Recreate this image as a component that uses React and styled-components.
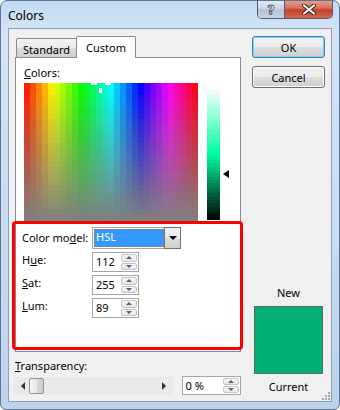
import React from "react";
import styled, { createGlobalStyle } from "styled-components";

const GlobalStyle = createGlobalStyle`
  html, body {
    margin: 0;
    padding: 0;
    background: #ffffff;
  }
  body {
    font-family: "Noto Sans", "Liberation Sans", sans-serif;
    font-size: 11px;
    color: #000;
  }
`;

const NEW_COLOR = "#00b074";

const Window = styled.div`
  width: 340px;
  height: 410px;
  box-sizing: border-box;
  border: 1px solid #5d7592;
  border-radius: 7px 7px 6px 6px;
  background: linear-gradient(180deg, #c4daf2 0%, #d4e4f5 8%, #c7dbf1 60%, #bcd3ee 100%);
  display: flex;
  flex-direction: column;
  overflow: hidden;
  position: relative;
`;

const TitleBar = styled.div`
  height: 27px;
  display: flex;
  align-items: flex-start;
  justify-content: space-between;
  padding-left: 7px;
`;

const Title = styled.div`
  font-size: 12px;
  line-height: 14px;
  padding-top: 8px;
  color: #000;
`;

const CaptionButtons = styled.div`
  display: flex;
  margin-right: 6px;
  margin-top: -1px;
  border: 1px solid #4d5e74;
  border-top: none;
  border-radius: 0 0 5px 5px;
  overflow: hidden;
  height: 18px;
`;

const CaptionButton = styled.div`
  height: 18px;
  display: flex;
  align-items: center;
  justify-content: center;
  box-sizing: border-box;
`;

const HelpButton = styled(CaptionButton)`
  width: 27px;
  background: linear-gradient(180deg, #e3ebf4 0%, #cdd9e6 45%, #b4c3d4 55%, #c5d3e2 100%);
  border-right: 1px solid #4d5e74;
  color: #fff;
  font-family: "DejaVu Sans", sans-serif;
  font-weight: bold;
  font-size: 13px;
  -webkit-text-stroke: 0.8px #3b4a5c;
`;

const CloseButton = styled(CaptionButton)`
  width: 47px;
  background: linear-gradient(180deg, #e8a493 0%, #d8705c 45%, #c2402a 55%, #d3674e 100%);
`;

const Client = styled.div`
  flex: 1;
  margin: 0 7px 7px 7px;
  border: 1px solid #8d9fb6;
  background: #f0f0f0;
  display: flex;
  position: relative;
`;

const LeftColumn = styled.div`
  width: 226px;
  margin-left: 6px;
  padding-top: 7px;
  display: flex;
  flex-direction: column;
`;

const Tabs = styled.div`
  display: flex;
  align-items: flex-end;
  height: 22px;
  padding-left: 1px;
  position: relative;
  z-index: 1;
  margin-bottom: -1px;
`;

const Tab = styled.div`
  box-sizing: border-box;
  height: ${(p) => (p.$active ? "22px" : "20px")};
  padding: ${(p) => (p.$active ? "3px 9px 0 9px" : "3px 6px 0 6px")};
  border: 1px solid #898c95;
  border-bottom: ${(p) => (p.$active ? "none" : "1px solid #898c95")};
  border-radius: 2px 2px 0 0;
  margin-left: ${(p) => (p.$active ? "-1px" : "0")};
  background: ${(p) =>
    p.$active ? "#ffffff" : "linear-gradient(180deg, #f2f2f2 0%, #ebebeb 50%, #dddddd 51%, #cfcfcf 100%)"};
  font-size: 11px;
  line-height: 15px;
  white-space: nowrap;
`;

const TabPanel = styled.div`
  box-sizing: border-box;
  height: 295px;
  border: 1px solid #898c95;
  background: #ffffff;
  display: flex;
  flex-direction: column;
  padding: 7px 0 0 8px;
`;

const FieldLabel = styled.div`
  font-size: 11px;
  line-height: 16px;
  white-space: nowrap;
`;

const Key = styled.span`
  text-decoration: underline;
  text-underline-offset: 1px;
`;

const PickerRow = styled.div`
  display: flex;
  align-items: flex-start;
  margin-top: 2px;
  height: 138px;
`;

const LumColumn = styled.div`
  margin-left: 9px;
  margin-top: 4px;
  display: flex;
  align-items: flex-start;
`;

const LumArrow = styled.div`
  width: 0;
  height: 0;
  margin-top: 83px;
  margin-left: 3px;
  border-top: 4px solid transparent;
  border-bottom: 4px solid transparent;
  border-right: 6px solid #000;
`;

const ModelBox = styled.div`
  box-sizing: border-box;
  height: 129px;
  margin: 0 -3px 0 -12px;
  border: 3px solid #ff0000;
  border-radius: 4px;
  position: relative;
  z-index: 2;
  padding: 3px 0 0 7px;
  display: flex;
  flex-direction: column;
  gap: 3px;
`;

const FormRow = styled.div`
  display: flex;
  align-items: flex-start;
`;

const RowLabel = styled.div`
  width: 70px;
  font-size: 11px;
  line-height: 16px;
  padding-top: ${(p) => (p.$top ? p.$top : 0)}px;
  white-space: nowrap;
`;

const Combo = styled.div`
  box-sizing: border-box;
  width: 89px;
  height: 22px;
  border: 1px solid #a5a5a5;
  background: #fff;
  display: flex;
  padding: 1px;
`;

const ComboValue = styled.div`
  flex: 1;
  background: #3399ff;
  color: #fff;
  font-size: 11px;
  line-height: 16px;
  padding-left: 2px;
  outline: 1px dotted #c07a2a;
  outline-offset: -1px;
`;

const ComboButton = styled.div`
  box-sizing: border-box;
  width: 17px;
  margin: -2px -2px -2px 0;
  border: 1px solid #707070;
  background: linear-gradient(180deg, #f2f2f2 0%, #ebebeb 50%, #dddddd 51%, #cfcfcf 100%);
  display: flex;
  align-items: center;
  justify-content: center;
`;

const DownTriangle = styled.div`
  width: 0;
  height: 0;
  border-left: 4px solid transparent;
  border-right: 4px solid transparent;
  border-top: 4px solid #000;
`;

const SpinBox = styled.div`
  box-sizing: border-box;
  width: ${(p) => p.$width}px;
  height: ${(p) => p.$height || 20}px;
  border: 1px solid #a5a5a5;
  background: #fff;
  display: flex;
  align-items: stretch;
`;

const SpinValue = styled.div`
  flex: 1;
  font-size: 11px;
  line-height: 18px;
  padding-left: 3px;
`;

const SpinButtons = styled.div`
  width: 16px;
  display: flex;
  flex-direction: column;
  padding: 1px 1px 1px 0;
  gap: 1px;
`;

const SpinHalf = styled.div`
  flex: 1;
  box-sizing: border-box;
  border: 1px solid #c4c4c4;
  border-radius: 2px;
  background: linear-gradient(180deg, #f7f7f7 0%, #e6e6e6 100%);
  display: flex;
  align-items: center;
  justify-content: center;
`;

const SpinArrow = styled.div`
  width: 0;
  height: 0;
  border-left: 3px solid transparent;
  border-right: 3px solid transparent;
  ${(p) => (p.$up ? "border-bottom: 3px solid #4e628a;" : "border-top: 3px solid #4e628a;")}
`;

const TransLabel = styled(FieldLabel)`
  margin-top: 6px;
`;

const SliderRow = styled.div`
  display: flex;
  align-items: center;
  margin-top: 2px;
  gap: 9px;
  margin-left: -1px;
`;

const ScrollTrack = styled.div`
  width: 160px;
  height: 18px;
  background: #e9e9e9;
  display: flex;
  align-items: center;
  padding: 0 7px;
  box-sizing: border-box;
  gap: 4px;
`;

const TrackArrow = styled.div`
  width: 0;
  height: 0;
  border-top: 4px solid transparent;
  border-bottom: 4px solid transparent;
  ${(p) => (p.$left ? "border-right: 4px solid #333;" : "border-left: 4px solid #333;")}
`;

const Thumb = styled.div`
  box-sizing: border-box;
  width: 15px;
  height: 16px;
  border: 1px solid #959595;
  border-radius: 2px;
  background: linear-gradient(90deg, #f3f3f3 0%, #e8e8e8 50%, #d9d9d9 51%, #cdcdcd 100%);
`;

const TrackFill = styled.div`
  flex: 1;
`;

const RightColumn = styled.div`
  width: 73px;
  margin-left: 11px;
  padding: 7px 0 6px 0;
  display: flex;
  flex-direction: column;
  align-items: center;
`;

const Button = styled.div`
  box-sizing: border-box;
  width: 73px;
  height: 22px;
  border: 1px solid ${(p) => (p.$default ? "#3c7fb1" : "#707070")};
  border-radius: 3px;
  box-shadow: ${(p) => (p.$default ? "inset 0 0 0 1px #78d5f5" : "inset 0 0 0 1px #fcfcfc")};
  background: linear-gradient(180deg, #f2f2f2 0%, #ebebeb 50%, #dddddd 51%, #cfcfcf 100%);
  display: flex;
  align-items: center;
  justify-content: center;
  font-size: 11px;
  margin-bottom: 8px;
`;

const Spacer = styled.div`
  flex: 1;
`;

const PreviewLabel = styled.div`
  font-size: 11px;
  line-height: 16px;
`;

const Swatch = styled.div`
  box-sizing: border-box;
  width: 69px;
  height: 68px;
  border: 1px solid #646464;
  background: ${(p) => p.$color};
  margin: 5px 0 5px 0;
`;

const Grip = styled.svg`
  position: absolute;
  right: 0;
  bottom: 0;
`;

function Spectrum() {
  const cols = 29;
  const rows = 23;
  const cells = [];
  for (let i = 0; i < cols; i++) {
    for (let j = 0; j < rows; j++) {
      const h = ((i + 0.5) / cols) * 360;
      const s = 100 - ((j + 0.5) / rows) * 100;
      cells.push(
        <rect
          key={i + "-" + j}
          x={i * 6}
          y={j * 6}
          width={6}
          height={6}
          fill={`hsl(${h.toFixed(1)}, ${s.toFixed(1)}%, 50%)`}
        />
      );
    }
  }
  return (
    <svg width="174" height="138" viewBox="0 0 174 138" shapeRendering="crispEdges">
      {cells}
      <rect x="67" y="0" width="6" height="2" fill="#fff" />
      <rect x="81" y="0" width="6" height="2" fill="#fff" />
      <rect x="75" y="5" width="3" height="5" fill="#fff" />
    </svg>
  );
}

function LumBar() {
  const steps = 40;
  const h = 133;
  const bands = [];
  for (let k = 0; k < steps; k++) {
    const l = 100 - ((k + 0.5) / steps) * 100;
    bands.push(
      <rect
        key={k}
        x="0"
        y={(k * h) / steps}
        width="13"
        height={h / steps + 0.5}
        fill={`hsl(158, 100%, ${l.toFixed(1)}%)`}
      />
    );
  }
  return (
    <svg width="13" height={h} viewBox={`0 0 13 ${h}`} shapeRendering="crispEdges">
      {bands}
    </svg>
  );
}

function Spin({ value, width, height }) {
  return (
    <SpinBox $width={width} $height={height}>
      <SpinValue>{value}</SpinValue>
      <SpinButtons>
        <SpinHalf>
          <SpinArrow $up />
        </SpinHalf>
        <SpinHalf>
          <SpinArrow />
        </SpinHalf>
      </SpinButtons>
    </SpinBox>
  );
}

export default function App() {
  return (
    <>
      <GlobalStyle />
      <Window>
        <TitleBar>
          <Title>Colors</Title>
          <CaptionButtons>
            <HelpButton>?</HelpButton>
            <CloseButton>
              <svg width="14" height="11" viewBox="0 0 14 11">
                <path d="M2 1.5 L12 9.5 M12 1.5 L2 9.5" stroke="#3a1a14" strokeWidth="4" strokeLinecap="round" />
                <path d="M2 1.5 L12 9.5 M12 1.5 L2 9.5" stroke="#ffffff" strokeWidth="2.2" strokeLinecap="round" />
              </svg>
            </CloseButton>
          </CaptionButtons>
        </TitleBar>
        <Client>
          <LeftColumn>
            <Tabs>
              <Tab>Standard</Tab>
              <Tab $active>Custom</Tab>
            </Tabs>
            <TabPanel>
              <FieldLabel>
                <Key>C</Key>olors:
              </FieldLabel>
              <PickerRow>
                <Spectrum />
                <LumColumn>
                  <LumBar />
                  <LumArrow />
                </LumColumn>
              </PickerRow>
              <ModelBox>
                <FormRow>
                  <RowLabel $top={3}>
                    Color mo<Key>d</Key>el:
                  </RowLabel>
                  <Combo>
                    <ComboValue>HSL</ComboValue>
                    <ComboButton>
                      <DownTriangle />
                    </ComboButton>
                  </Combo>
                </FormRow>
                <FormRow>
                  <RowLabel>
                    H<Key>u</Key>e:
                  </RowLabel>
                  <Spin value="112" width={47} />
                </FormRow>
                <FormRow>
                  <RowLabel>
                    <Key>S</Key>at:
                  </RowLabel>
                  <Spin value="255" width={47} />
                </FormRow>
                <FormRow>
                  <RowLabel>
                    <Key>L</Key>um:
                  </RowLabel>
                  <Spin value="89" width={47} />
                </FormRow>
              </ModelBox>
            </TabPanel>
            <TransLabel>
              <Key>T</Key>ransparency:
            </TransLabel>
            <SliderRow>
              <ScrollTrack>
                <TrackArrow $left />
                <Thumb />
                <TrackFill />
                <TrackArrow />
              </ScrollTrack>
              <Spin value="0 %" width={60} height={19} />
            </SliderRow>
          </LeftColumn>
          <RightColumn>
            <Button $default>OK</Button>
            <Button>Cancel</Button>
            <Spacer />
            <PreviewLabel>New</PreviewLabel>
            <Swatch $color={NEW_COLOR} />
            <PreviewLabel>Current</PreviewLabel>
          </RightColumn>
          <Grip width="10" height="10" viewBox="0 0 10 10">
            <rect x="7" y="1" width="2" height="2" fill="#a9a9a9" />
            <rect x="4" y="4" width="2" height="2" fill="#a9a9a9" />
            <rect x="7" y="4" width="2" height="2" fill="#a9a9a9" />
            <rect x="1" y="7" width="2" height="2" fill="#a9a9a9" />
            <rect x="4" y="7" width="2" height="2" fill="#a9a9a9" />
            <rect x="7" y="7" width="2" height="2" fill="#a9a9a9" />
          </Grip>
        </Client>
      </Window>
    </>
  );
}
